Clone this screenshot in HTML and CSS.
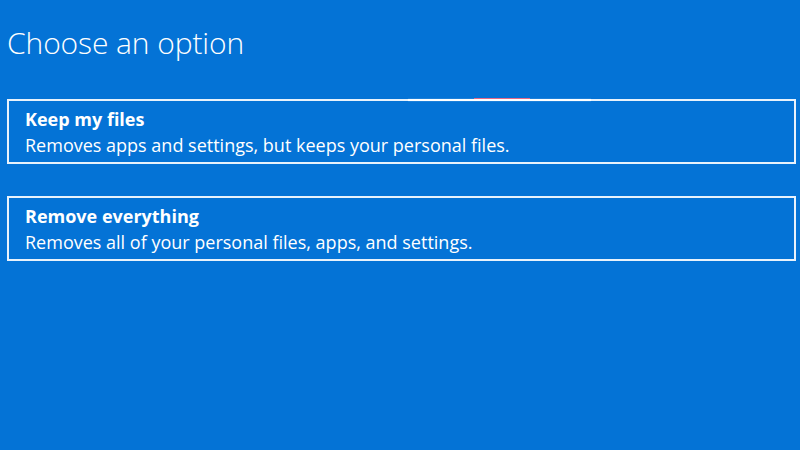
FILE: index.html
```html
<!DOCTYPE html>
<html>
<head>
<meta charset="utf-8">
<link rel="stylesheet" href="styles.css">
</head>
<body>
<main class="page">
  <h1 class="title">Choose an option</h1>
  <div class="options">
    <div class="option option-first">
      <div class="option-name">Keep my files</div>
      <div class="option-desc">Removes apps and settings, but keeps your personal files.</div>
    </div>
    <div class="option">
      <div class="option-name">Remove everything</div>
      <div class="option-desc">Removes all of your personal files, apps, and settings.</div>
    </div>
  </div>
</main>
</body>
</html>
```

FILE: styles.css
```css
html, body {
  margin: 0;
  padding: 0;
  background: #0473d6;
  width: 800px;
  height: 450px;
  overflow: hidden;
}
.page {
  font-family: "Open Sans", "Noto Sans", sans-serif;
  color: #ffffff;
  padding: 25px 4px 0 7px;
}
.title {
  margin: 0 0 0 0;
  font-weight: 300;
  font-size: 30px;
  line-height: 36px;
  letter-spacing: -0.1px;
}
.options {
  margin-top: 38px;
  display: flex;
  flex-direction: column;
  gap: 32px;
}
.option {
  position: relative;
  border: 2px solid #e8f2fc;
  box-sizing: border-box;
  height: 65px;
  padding: 5px 16px 0 16px;
}
.option-first::before {
  content: "";
  position: absolute;
  top: -2px;
  left: 399px;
  width: 183px;
  height: 2px;
  background: #ffffff;
  box-shadow: 0 0 1px #ffffff;
}
.option-first::after {
  content: "";
  position: absolute;
  top: -3px;
  left: 465px;
  width: 56px;
  height: 1px;
  background: #e46a8a;
}
.option-name {
  font-weight: 700;
  font-size: 18px;
  line-height: 26px;
}
.option-desc {
  font-size: 18px;
  line-height: 26px;
}
```
